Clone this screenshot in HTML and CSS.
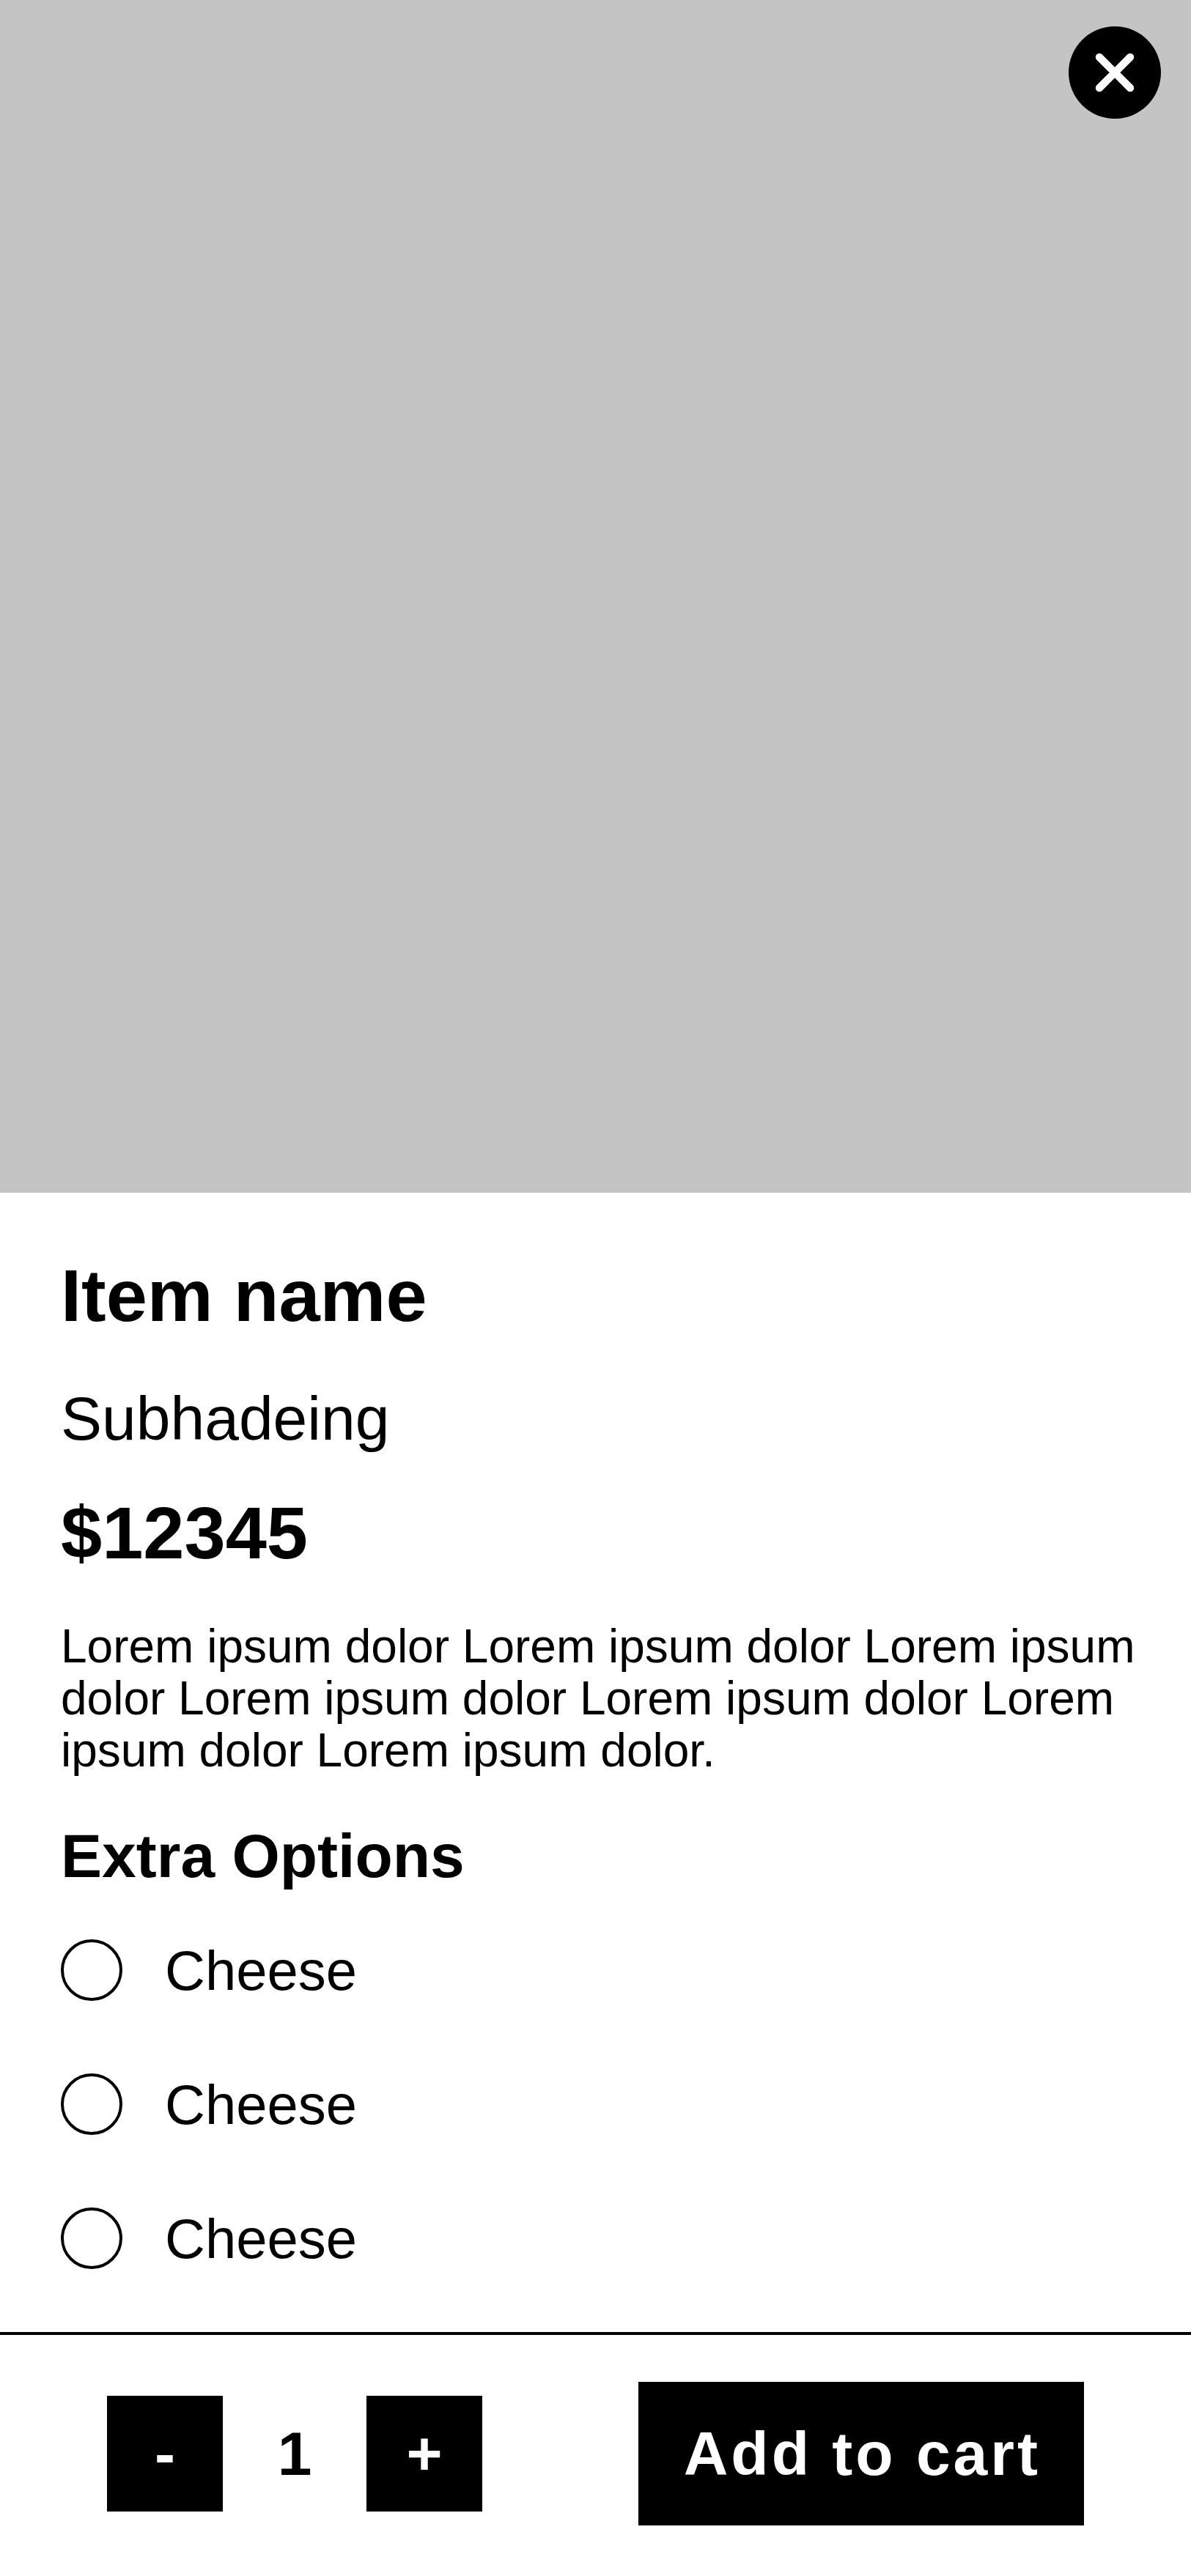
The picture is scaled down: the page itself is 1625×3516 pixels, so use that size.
FILE: index.html
```html
<!DOCTYPE html>
<html lang="en">
<head>
  <meta charset="utf-8">
  <meta name="viewport" content="width=device-width, initial-scale=1">
  <title>Item name</title>
  <link rel="stylesheet" href="styles.css">
</head>
<body>
  <div class="page">
    <header class="hero">
      <button class="close" type="button" aria-label="Close">
        <svg class="close-icon" viewBox="0 0 126 126" aria-hidden="true">
          <path d="M42 42 84 84M84 42 42 84" fill="none" stroke="#fff" stroke-width="10.4" stroke-linecap="round"/>
        </svg>
      </button>
    </header>

    <main class="details">
      <h1 class="title">Item name</h1>
      <p class="subheading">Subhadeing</p>
      <p class="price">$12345</p>
      <p class="description">Lorem ipsum dolor Lorem ipsum dolor Lorem ipsum dolor Lorem ipsum dolor Lorem ipsum dolor Lorem ipsum dolor Lorem ipsum dolor.</p>

      <h2 class="options-title" id="extras">Extra Options</h2>
      <div class="options" role="radiogroup" aria-labelledby="extras">
        <label class="option"><input class="radio" type="radio" name="extra" value="1">Cheese</label>
        <label class="option"><input class="radio" type="radio" name="extra" value="2">Cheese</label>
        <label class="option"><input class="radio" type="radio" name="extra" value="3">Cheese</label>
      </div>
    </main>

    <footer class="bar">
      <div class="stepper" role="group" aria-label="Quantity">
        <button class="step" type="button" aria-label="Decrease">-</button>
        <output class="count">1</output>
        <button class="step" type="button" aria-label="Increase">+</button>
      </div>
      <button class="add" type="button">Add to cart</button>
    </footer>
  </div>
</body>
</html>
```

FILE: styles.css
```css
* {
  box-sizing: border-box;
}

body {
  margin: 0;
  background: #fff;
  color: #000;
  font-family: "Liberation Sans", Arial, sans-serif;
}

button {
  border: 0;
  padding: 0;
  background: #000;
  color: #fff;
  font: inherit;
  cursor: pointer;
}

.page {
  display: flex;
  flex-direction: column;
  min-height: 100vh;
}

/* Product photo area */
.hero {
  display: flex;
  justify-content: flex-end;
  align-items: flex-start;
  padding: 36px 41px;
  aspect-ratio: 500 / 501;
  background: #c4c4c4;
}

.close {
  width: 126px;
  height: 126px;
  border-radius: 50%;
}

.close-icon {
  display: block;
  width: 100%;
}

/* Item details */
.details {
  flex: 1;
  padding: 82px 64px 85px 83px;
}

.title,
.price {
  margin: 0;
  font-size: 101px;
  font-weight: 700;
  line-height: 116px;
}

.subheading {
  margin: 62px 0 50px;
  font-size: 84px;
  line-height: 96px;
}

.description {
  margin: 62px 0 60px;
  font-size: 64px;
  line-height: 71px;
}

.options-title {
  margin: 0 0 66px;
  font-size: 84px;
  font-weight: 700;
  line-height: 96px;
}

.options {
  display: flex;
  flex-direction: column;
  align-items: flex-start;
  gap: 99px;
}

.option {
  display: flex;
  align-items: center;
  gap: 58px;
  height: 84px;
  font-size: 76px;
}

.radio {
  appearance: none;
  width: 84px;
  height: 84px;
  margin: 0;
  border: 4px solid #000;
  border-radius: 50%;
}

.radio:checked {
  background: #000;
  box-shadow: inset 0 0 0 14px #fff;
}

/* Quantity and add to cart */
.bar {
  display: flex;
  justify-content: space-between;
  align-items: center;
  padding: 64px 146px 69px;
  border-top: 4px solid #000;
  font-size: 84px;
  font-weight: 700;
}

.stepper {
  display: flex;
  align-items: center;
}

.step {
  width: 158px;
  height: 158px;
}

.count {
  width: 196px;
  text-align: center;
}

.add {
  height: 196px;
  padding: 0 59px 0 62px;
  letter-spacing: 4px;
}
```
